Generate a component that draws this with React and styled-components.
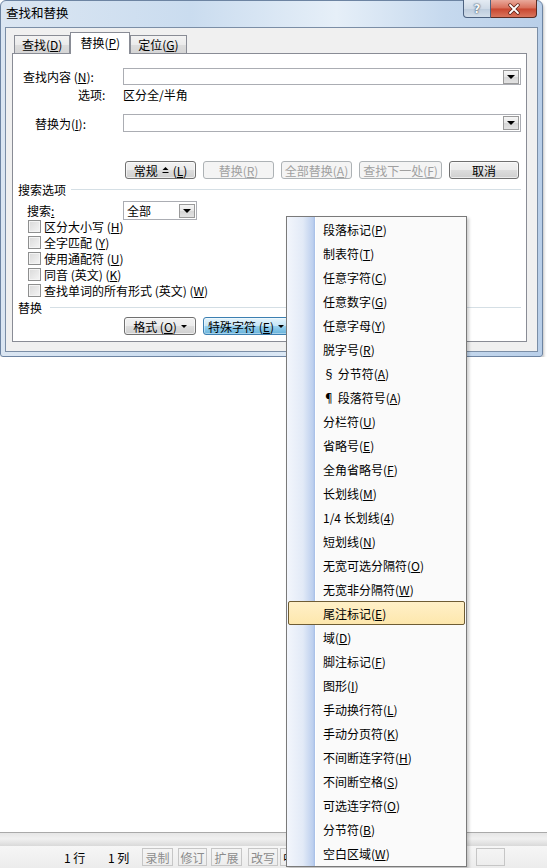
import React from "react";
import styled, { createGlobalStyle, css } from "styled-components";

const GlobalStyle = createGlobalStyle`
  html, body { margin: 0; padding: 0; background: #fff; }
  body {
    font-family: "Noto Sans CJK SC", "Noto Sans", sans-serif;
    font-size: 12px;
    color: #000;
  }
  * { box-sizing: border-box; }
`;

const Page = styled.div`
  position: relative;
  height: 868px;
  display: flex;
  flex-direction: column;
  overflow: hidden;
  background: #fff;
`;

/* ---------- dialog window ---------- */

const Window = styled.div`
  width: 543px;
  height: 357px;
  flex-shrink: 0;
  display: flex;
  flex-direction: column;
  border: 1px solid #6d84a2;
  border-radius: 6px 6px 3px 3px;
  background: linear-gradient(90deg, #dbe6f2 0%, #cadcef 35%, #e6eff8 62%, #c6d9ee 82%, #b9cfe9 100%);
  box-shadow: 1px 2px 3px rgba(0, 0, 0, 0.25);
`;

const TitleBar = styled.div`
  height: 26px;
  display: flex;
  justify-content: space-between;
  align-items: flex-start;
`;

const Title = styled.div`
  padding: 4px 0 0 5px;
  line-height: 16px;
  font-size: 12.5px;
`;

const Caps = styled.div`
  display: flex;
  margin: -1px 5px 0 0;
`;

const HelpBtn = styled.div`
  width: 28px;
  height: 18px;
  border: 1px solid #4d6280;
  border-top: none;
  border-radius: 0 0 0 4px;
  background: linear-gradient(#e4ebf3, #cfdae7 50%, #bccbdc 51%, #d3deea);
  display: flex;
  align-items: center;
  justify-content: center;
  color: #f7f9fb;
  font: bold 12px "DejaVu Sans", sans-serif;
  text-shadow: 0 0 2px #3c4d63, 0 0 1px #3c4d63;
`;

const CloseBtn = styled.div`
  width: 46px;
  height: 18px;
  border: 1px solid #5b2b22;
  border-top: none;
  border-left: none;
  border-radius: 0 0 4px 0;
  background: linear-gradient(#e9a99b, #d86e59 48%, #c8462f 52%, #d9755d);
  display: flex;
  align-items: center;
  justify-content: center;
`;

const Client = styled.div`
  flex: 1;
  min-height: 0;
  margin: 0 4px 4px;
  border: 1px solid #7b8ea6;
  background: #f0f0f0;
  display: flex;
  flex-direction: column;
  padding: 4px 10px 9px 6px;
`;

const TabRow = styled.div`
  height: 21px;
  display: flex;
  align-items: flex-end;
  padding-left: 2px;
  position: relative;
  z-index: 1;
`;

const Tab = styled.div`
  height: 18px;
  padding: 0 7px;
  border: 1px solid #898c95;
  border-bottom: none;
  background: linear-gradient(#f3f3f3, #ebebeb 50%, #dddddd 51%, #d5d5d5);
  display: flex;
  align-items: center;
  white-space: nowrap;
  ${(p) =>
    p.$active &&
    css`
      height: 22px;
      margin-bottom: -1px;
      padding: 0 9px 2px;
      background: #fff;
    `}
`;

const Panel = styled.div`
  flex: 1;
  min-height: 0;
  background: #fff;
  border: 1px solid #898c95;
  padding: 14px 5px 0 0;
  display: flex;
  flex-direction: column;
`;

const FieldRow = styled.div`
  display: grid;
  grid-template-columns: 110px 1fr;
  align-items: center;
  height: ${(p) => p.$h}px;
  margin-top: ${(p) => p.$mt || 0}px;
`;

const Label = styled.span`
  padding-left: ${(p) => p.$indent}px;
  white-space: nowrap;
`;

const Combo = styled.div`
  height: 100%;
  width: ${(p) => (p.$w ? `${p.$w}px` : "auto")};
  border: 1px solid #abadb3;
  background: #fff;
  display: flex;
  align-items: center;
  justify-content: space-between;
  padding: 0 1px 0 3px;
`;

const DropBtn = styled.div`
  width: 16px;
  height: 14px;
  border: 1px solid #9a9a9a;
  background: linear-gradient(#f6f6f6, #e6e6e6 50%, #d6d6d6 51%, #e2e2e2);
  display: flex;
  align-items: center;
  justify-content: center;
`;

const Tri = styled.span`
  display: inline-block;
  width: 0;
  height: 0;
  border-left: ${(p) => p.$s || 4}px solid transparent;
  border-right: ${(p) => p.$s || 4}px solid transparent;
  border-top: ${(p) => p.$s || 4}px solid #000;
`;

const BtnRow = styled.div`
  grid-column: 2;
  display: flex;
  gap: 7px;
  padding-left: ${(p) => p.$pl || 0}px;
`;

const Btn = styled.div`
  width: ${(p) => p.$w}px;
  height: 18px;
  border: 1px solid #707070;
  border-radius: 3px;
  background: linear-gradient(#f2f2f2, #ebebeb 50%, #dddddd 51%, #cfcfcf);
  display: flex;
  align-items: center;
  justify-content: center;
  gap: 4px;
  white-space: nowrap;
  box-shadow: inset 0 0 0 1px rgba(255, 255, 255, 0.6);
  ${(p) =>
    p.$disabled &&
    css`
      border-color: #adb2b5;
      background: #f4f4f4;
      color: #a0a0a0;
      box-shadow: none;
    `}
  ${(p) =>
    p.$pressed &&
    css`
      border-color: #3c7fb1;
      background: linear-gradient(#e5f4fc, #c4e5f6 50%, #98d1ef 51%, #68b3db);
      box-shadow: inset 0 0 0 1px rgba(255, 255, 255, 0.4);
    `}
`;

const SectionHead = styled.div`
  height: 14px;
  display: flex;
  align-items: center;
  gap: ${(p) => p.$gap}px;
  padding-left: 5px;
  margin-top: ${(p) => p.$mt}px;
  white-space: nowrap;
  &::after {
    content: "";
    flex: 1;
    height: 1px;
    background: #d5dfe5;
  }
`;

const CheckList = styled.div`
  margin-top: -1px;
`;

const CheckRow = styled.div`
  height: 16px;
  display: flex;
  align-items: center;
  gap: 3px;
  padding-left: 15px;
  white-space: nowrap;
`;

const CheckBox = styled.span`
  width: 13px;
  height: 13px;
  border: 1px solid #8e8f8f;
  background: linear-gradient(135deg, #d9d9d9, #f5f5f5);
  box-shadow: inset 0 0 0 1px #f4f4f4;
`;

const Key = styled.u`
  text-underline-offset: 1px;
`;

/* ---------- popup menu ---------- */

const Menu = styled.div`
  position: absolute;
  left: 286px;
  top: 216px;
  width: 181px;
  height: 651px;
  border: 1px solid #7a7a7a;
  background: linear-gradient(
    90deg,
    #f3f6fc 0px,
    #e2eaf7 16px,
    #bccfee 26px,
    #a5bde6 28px,
    #ffffff 28px,
    #ffffff 29px,
    #fafafa 29px
  );
  box-shadow: 2px 2px 3px rgba(0, 0, 0, 0.2);
  padding: 0 1px;
  display: flex;
  flex-direction: column;
  z-index: 5;
`;

const MenuItem = styled.div`
  height: 24px;
  flex-shrink: 0;
  border: 1px solid transparent;
  border-radius: 2px;
  padding-left: 34px;
  display: flex;
  align-items: center;
  white-space: nowrap;
  ${(p) =>
    p.$hot &&
    css`
      border-color: #6e5c34;
      background: linear-gradient(#fff0c8, #fde7ad);
    `}
`;

/* ---------- document + status bar ---------- */

const Doc = styled.div`
  flex: 1;
  background: #fff;
`;

const StatusBand = styled.div`
  height: 14px;
  border-top: 1px solid #a9a9a9;
  background: linear-gradient(#e6e6e6, #f0f0f0 45%, #d9d9d9);
`;

const StatusRow = styled.div`
  height: 22px;
  background: linear-gradient(#f6f6f6, #ececec);
  display: flex;
  align-items: center;
  padding-left: 64px;
`;

const StatusText = styled.span`
  width: ${(p) => p.$w}px;
  flex-shrink: 0;
  white-space: pre;
`;

const StatusCell = styled.span`
  width: ${(p) => p.$w}px;
  height: 18px;
  flex-shrink: 0;
  margin-left: ${(p) => p.$ml || 4}px;
  border: 1px solid #c6c6c6;
  color: ${(p) => (p.$on ? "#000" : "#8c8c8c")};
  display: flex;
  align-items: center;
  justify-content: ${(p) => (p.$on ? "flex-start" : "center")};
  padding-left: ${(p) => (p.$on ? 2 : 0)}px;
  white-space: nowrap;
  overflow: hidden;
`;

const menuItems = [
  ["段落标记", "P"],
  ["制表符", "T"],
  ["任意字符", "C"],
  ["任意数字", "G"],
  ["任意字母", "Y"],
  ["脱字号", "R"],
  ["§ 分节符", "A"],
  ["¶ 段落符号", "A"],
  ["分栏符", "U"],
  ["省略号", "E"],
  ["全角省略号", "F"],
  ["长划线", "M"],
  ["1/4 长划线", "4"],
  ["短划线", "N"],
  ["无宽可选分隔符", "O"],
  ["无宽非分隔符", "W"],
  ["尾注标记", "E"],
  ["域", "D"],
  ["脚注标记", "F"],
  ["图形", "I"],
  ["手动换行符", "L"],
  ["手动分页符", "K"],
  ["不间断连字符", "H"],
  ["不间断空格", "S"],
  ["可选连字符", "O"],
  ["分节符", "B"],
  ["空白区域", "W"],
];

const checks = [
  ["区分大小写", "H"],
  ["全字匹配", "Y"],
  ["使用通配符", "U"],
  ["同音 (英文)", "K"],
  ["查找单词的所有形式 (英文)", "W"],
];

const LessIcon = () => (
  <svg width="7" height="8" viewBox="0 0 7 8">
    <path d="M0.5 4 L3.5 1 L6.5 4 Z" fill="#000" />
    <rect x="0.5" y="6" width="6" height="1" fill="#000" />
  </svg>
);

const CloseX = () => (
  <svg width="14" height="12" viewBox="0 0 14 12">
    <path
      d="M3 2 L11 10 M11 2 L3 10"
      stroke="#5a2016"
      strokeWidth="3.4"
      strokeLinecap="round"
      fill="none"
    />
    <path d="M3 2 L11 10 M11 2 L3 10" stroke="#fff" strokeWidth="1.8" strokeLinecap="round" fill="none" />
  </svg>
);

export default function App() {
  return (
    <Page>
      <GlobalStyle />
      <Window>
        <TitleBar>
          <Title>查找和替换</Title>
          <Caps>
            <HelpBtn>?</HelpBtn>
            <CloseBtn>
              <CloseX />
            </CloseBtn>
          </Caps>
        </TitleBar>
        <Client>
          <TabRow>
            <Tab>
              <span>查找(<Key>D</Key>)</span>
            </Tab>
            <Tab $active>
              <span>替换(<Key>P</Key>)</span>
            </Tab>
            <Tab>
              <span>定位(<Key>G</Key>)</span>
            </Tab>
          </TabRow>
          <Panel>
            <FieldRow $h={17}>
              <Label $indent={10}>
                查找内容 (<Key>N</Key>):
              </Label>
              <Combo>
                <span />
                <DropBtn>
                  <Tri $s={4} />
                </DropBtn>
              </Combo>
            </FieldRow>
            <FieldRow $h={14} $mt={1}>
              <Label $indent={65}>选项:</Label>
              <span>区分全/半角</span>
            </FieldRow>
            <FieldRow $h={18} $mt={14}>
              <Label $indent={22}>
                替换为(<Key>I</Key>):
              </Label>
              <Combo>
                <span />
                <DropBtn>
                  <Tri $s={4} />
                </DropBtn>
              </Combo>
            </FieldRow>
            <FieldRow $h={18} $mt={29}>
              <span />
              <BtnRow $pl={2}>
                <Btn $w={71}>
                  <span>常规</span>
                  <LessIcon />
                  <span>(<Key>L</Key>)</span>
                </Btn>
                <Btn $w={71} $disabled>
                  <span>替换(<Key>R</Key>)</span>
                </Btn>
                <Btn $w={71} $disabled>
                  <span>全部替换(<Key>A</Key>)</span>
                </Btn>
                <Btn $w={83} $disabled>
                  <span>查找下一处(<Key>F</Key>)</span>
                </Btn>
                <Btn $w={70}>取消</Btn>
              </BtnRow>
            </FieldRow>
            <SectionHead $mt={3} $gap={5}>
              搜索选项
            </SectionHead>
            <FieldRow $h={18} $mt={5}>
              <Label $indent={14}>
                搜索<Key>:</Key>
              </Label>
              <Combo $w={74}>
                <span>全部</span>
                <DropBtn>
                  <Tri $s={4} />
                </DropBtn>
              </Combo>
            </FieldRow>
            <CheckList>
              {checks.map(([t, k]) => (
                <CheckRow key={t}>
                  <CheckBox />
                  <span>
                    {t} (<Key>{k}</Key>)
                  </span>
                </CheckRow>
              ))}
            </CheckList>
            <SectionHead $mt={2} $gap={8}>
              替换
            </SectionHead>
            <FieldRow $h={18} $mt={3}>
              <span />
              <BtnRow $pl={1}>
                <Btn $w={72}>
                  <span>格式 (<Key>O</Key>)</span>
                  <Tri $s={3} />
                </Btn>
                <Btn $w={86} $pressed>
                  <span>特殊字符 (<Key>E</Key>)</span>
                  <Tri $s={3} />
                </Btn>
              </BtnRow>
            </FieldRow>
          </Panel>
        </Client>
      </Window>
      <Doc />
      <StatusBand />
      <StatusRow>
        <StatusText $w={44}>1 行</StatusText>
        <StatusText $w={30}>1 列</StatusText>
        <StatusCell $w={31}>录制</StatusCell>
        <StatusCell $w={29} $ml={5}>修订</StatusCell>
        <StatusCell $w={31}>扩展</StatusCell>
        <StatusCell $w={30} $ml={6}>改写</StatusCell>
        <StatusCell $w={120} $ml={2} $on>
          中
        </StatusCell>
        <StatusCell $w={29} $ml={76} />
      </StatusRow>
      <Menu>
        {menuItems.map(([t, k], i) => (
          <MenuItem key={i} $hot={i === 16}>
            {t}(<Key>{k}</Key>)
          </MenuItem>
        ))}
      </Menu>
    </Page>
  );
}
